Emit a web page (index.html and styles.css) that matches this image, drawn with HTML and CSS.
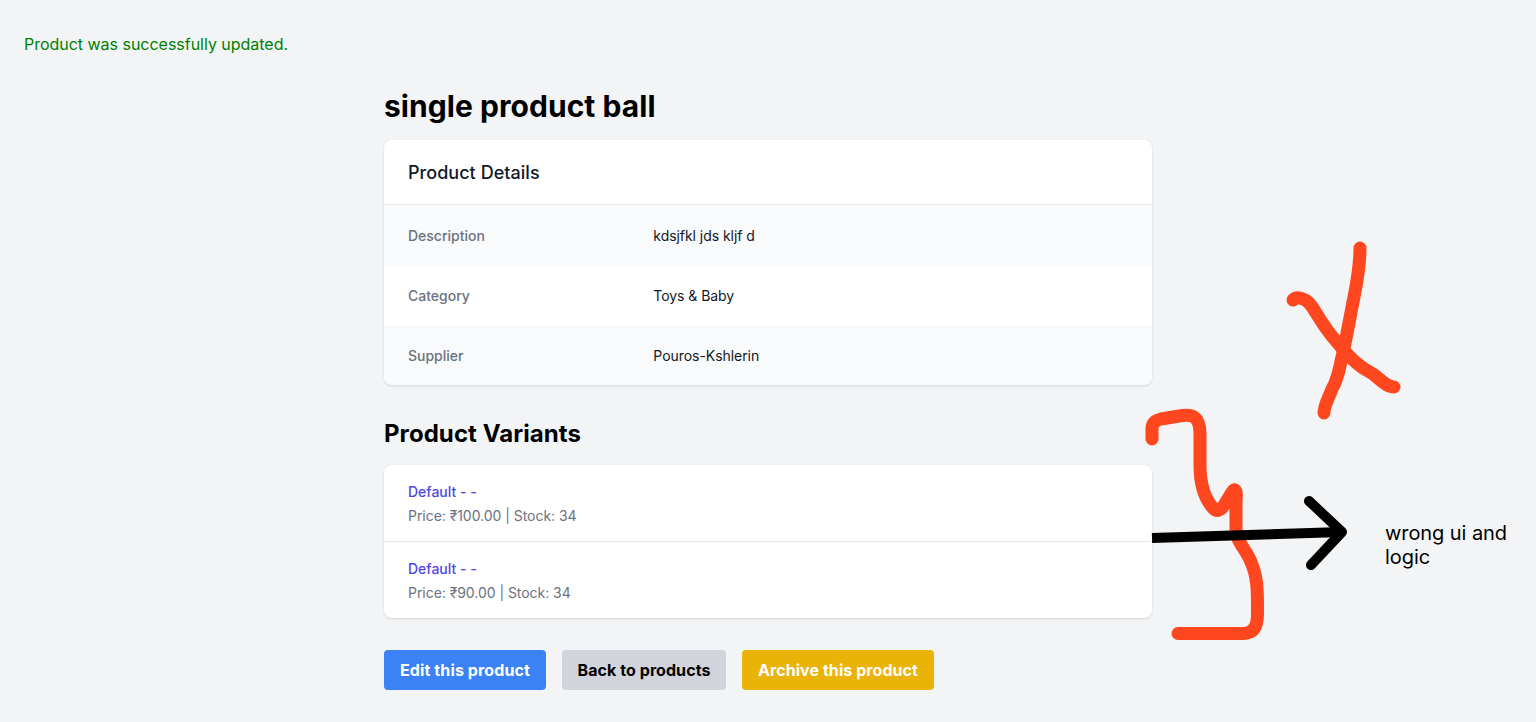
FILE: index.html
```html
<!DOCTYPE html>
<html lang="en">
<head>
<meta charset="utf-8">
<title>single product ball</title>
<link rel="stylesheet" href="styles.css">
</head>
<body>
<p class="notice">Product was successfully updated.</p>
<main class="product">
  <h1 class="title">single product ball</h1>
  <section class="card">
    <h3 class="card-heading">Product Details</h3>
    <dl class="details">
      <div class="row"><dt>Description</dt><dd>kdsjfkl jds kljf d</dd></div>
      <div class="row"><dt>Category</dt><dd>Toys &amp; Baby</dd></div>
      <div class="row"><dt>Supplier</dt><dd>Pouros-Kshlerin</dd></div>
    </dl>
  </section>
  <h2 class="subtitle">Product Variants</h2>
  <ul class="card variants">
    <li class="variant"><a class="variant-name">Default - -</a><p class="variant-info">Price: ₹100.00 | Stock: 34</p></li>
    <li class="variant"><a class="variant-name">Default - -</a><p class="variant-info">Price: ₹90.00 | Stock: 34</p></li>
  </ul>
  <div class="actions">
    <a class="button edit">Edit this product</a>
    <a class="button back">Back to products</a>
    <a class="button archive">Archive this product</a>
  </div>
</main>
<svg class="drawing" width="1536" height="722" viewBox="0 0 1536 722" fill="none" stroke-linecap="round" stroke-linejoin="round">
  <g stroke="#ff471f" stroke-width="13">
    <path d="M1360 248C1360 266 1357 282 1354 297C1350 317 1346 340 1342 357C1339 370 1338 379 1332 389C1328 400 1324 405 1324 413"/>
    <path d="M1293 300C1296 296 1305 298 1310 304C1317 313 1322 325 1336 341C1344 351 1354 362 1363 368L1373 374C1379 378 1386 387 1394 387"/>
    <path d="M1152 439V429Q1152 421 1161 419L1179 416C1192 413.500 1200 416 1200 434V465C1200 486 1205 499 1213 508Q1217 513 1222 508C1227 502 1233 488 1235 490Q1237 491 1236 501V529C1236 542 1246 549 1251 562C1258 578 1257.500 592 1257.500 614C1257.500 627 1253 633.500 1243 633.500H1178"/>
  </g>
  <g stroke="#000" stroke-width="10">
    <path d="M1152 538L1342 532" stroke-linecap="butt"/>
    <path d="M1309 501L1342 532L1311 565"/>
  </g>
</svg>
<p class="note">wrong ui and<br>logic</p>
</body>
</html>
```
FILE: styles.css
```css
* { box-sizing: border-box; margin: 0; padding: 0; }
body { background: #f3f4f6; color: #000; font-family: Inter, "Noto Sans", sans-serif; font-size: 16px; line-height: 24px; height: 722px; overflow: hidden; position: relative; }
.notice { color: #008000; padding: 32px 24px 0; letter-spacing: -.02px; }
.product { width: 768px; margin: 32px auto 0; }
.title { font-size: 30px; line-height: 36px; font-weight: 700; margin-bottom: 16px; letter-spacing: .05px; }
.card { background: #fff; border-radius: 8px; overflow: hidden; box-shadow: 0 1px 3px rgba(0,0,0,.1), 0 1px 2px -1px rgba(0,0,0,.1); }
.card-heading { padding: 21px 24px 19px; font-size: 18px; line-height: 24px; font-weight: 500; color: #111827; border-bottom: 1px solid #e5e7eb; letter-spacing: .04px; }
.row { display: grid; grid-template-columns: repeat(3, minmax(0, 1fr)); gap: 16px; padding: 21px 24px 19px; font-size: 14px; line-height: 20px; }
.row:nth-child(odd) { background: #f9fafb; }
.row dt { color: #6b7280; font-weight: 500; }
.row dd { color: #111827; grid-column: span 2; letter-spacing: -.05px; }
.subtitle { margin: 33px 0 15px; font-size: 24px; line-height: 32px; font-weight: 700; letter-spacing: .07px; }
.variants { list-style: none; }
.variant { padding: 17px 24px 15px; font-size: 14px; line-height: 20px; }
.variant + .variant { border-top: 1px solid #e5e7eb; }
.variant-name { display: block; color: #4f46e5; font-weight: 500; }
.variant-info { margin-top: 4px; color: #6b7280; letter-spacing: -.04px; }
.actions { display: flex; gap: 16px; margin-top: 32px; }
.button { padding: 8px 0; border-radius: 4px; font-weight: 700; color: #fff; text-align: center; letter-spacing: .07px; }
.edit { width: 162px; background: #3b82f6; letter-spacing: .11px; }
.back { width: 164px; background: #d1d5db; color: #000; }
.archive { width: 192px; background: #eab308; }
.drawing { position: absolute; left: 0; top: 0; }
.note { position: absolute; left: 1385px; top: 521px; font-size: 20px; line-height: 24px; letter-spacing: -.07px; }
```
